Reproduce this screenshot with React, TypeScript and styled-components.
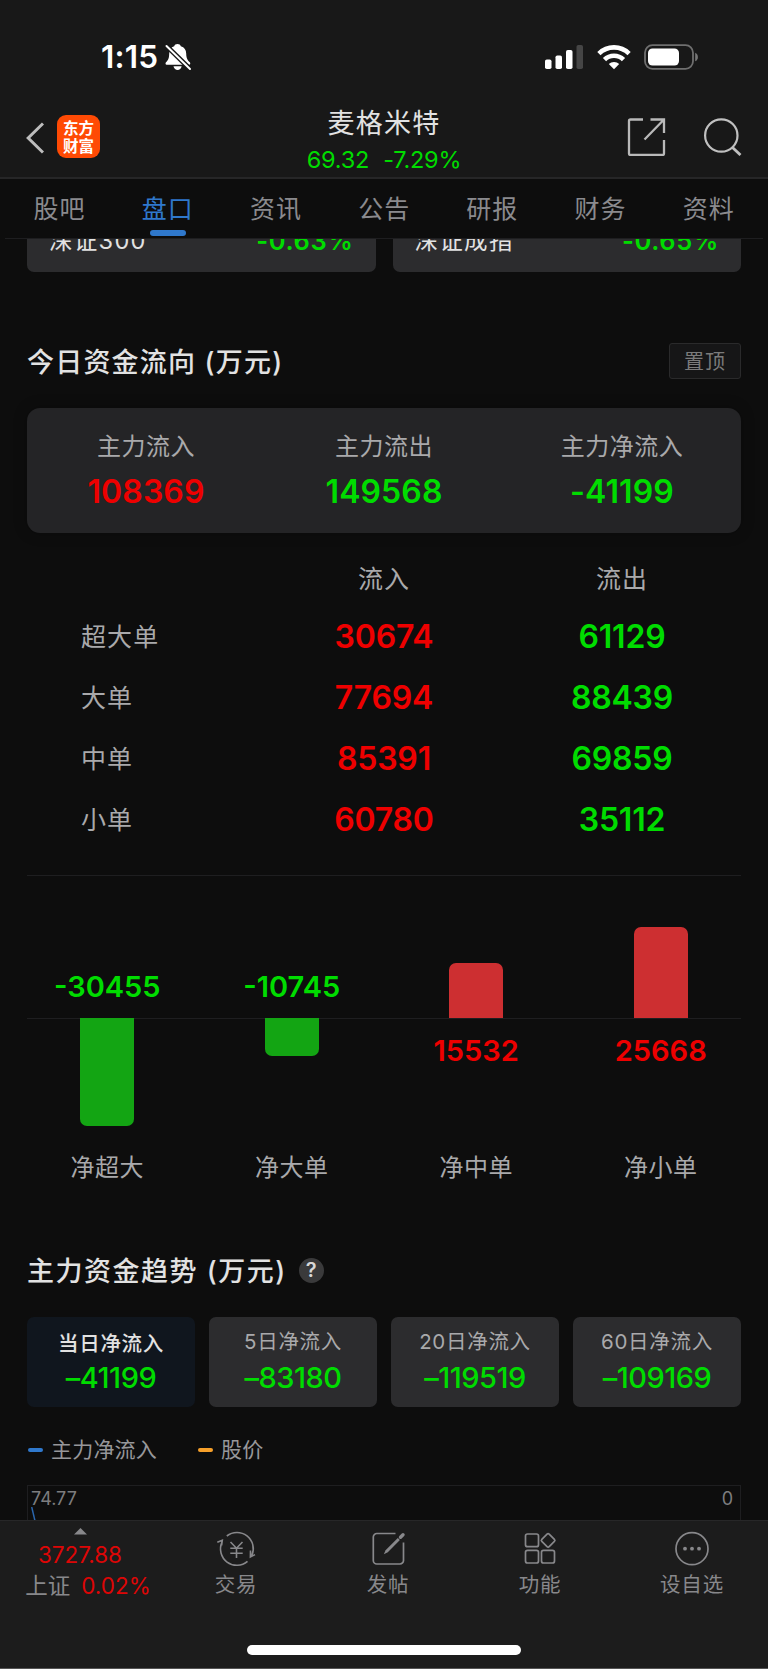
import React from "react";
import styled, { createGlobalStyle, css } from "styled-components";

const RED = "#ee0000";
const GREEN = "#00dc00";
const BLUE = "#2f78cc";
const LINE = "#1e1e20";

const GlobalStyle = createGlobalStyle`
  * { box-sizing: border-box; }
  body {
    margin: 0;
    background: #0d0d0d;
    font-family: Inter, "Noto Sans CJK SC", sans-serif;
    color: #e2e2e2;
    -webkit-font-smoothing: antialiased;
  }
`;

const Page = styled.div`
  width: 768px;
  height: 1669px;
  display: flex;
  flex-direction: column;
  overflow: hidden;
  background: #0d0d0d;
  white-space: nowrap;
`;

/* ---------- status bar ---------- */

const StatusBar = styled.div`
  height: 100px;
  flex: none;
  display: flex;
  justify-content: space-between;
  padding: 40px 69px 0 101px;
  background: #181818;
`;

const StatusGroup = styled.div<{ $gap: number }>`
  height: 34px;
  display: flex;
  align-items: center;
  gap: ${(p) => p.$gap}px;
`;

const Clock = styled.span`
  font-size: 31.5px;
  line-height: 34px;
  font-weight: 600;
  color: #fff;
  width: 57px;
  letter-spacing: 0.2px;
`;

/* ---------- title bar ---------- */

const TitleBar = styled.header`
  height: 79px;
  flex: none;
  display: grid;
  grid-template-columns: 200px 1fr 200px;
  background: #181818;
  border-bottom: 2px solid #262627;
`;

const TitleLeft = styled.div`
  display: flex;
  align-items: flex-start;
  padding: 15px 0 0 26px;
  gap: 13px;
`;

const BackIcon = styled.svg`
  margin-top: 7px;
`;

const Logo = styled.div`
  width: 43px;
  height: 43px;
  border-radius: 9px;
  background: #ff4a04;
  color: #fff;
  font: 700 15.5px/18px "Noto Sans CJK SC", sans-serif;
  text-align: center;
  padding-top: 3px;
`;

const TitleCenter = styled.div`
  display: flex;
  flex-direction: column;
  align-items: center;
  padding-top: 6px;
`;

const StockName = styled.div`
  font-size: 27px;
  line-height: 36px;
  letter-spacing: 1.2px;
`;

const StockPrice = styled.div`
  display: flex;
  gap: 14px;
  font-size: 23.5px;
  line-height: 34px;
  margin-top: 1px;
  color: ${GREEN};
  letter-spacing: -0.2px;
`;

const TitleRight = styled.div`
  display: flex;
  align-items: flex-start;
  justify-content: flex-end;
  gap: 38px;
  padding: 17px 26px 0 0;
`;

/* ---------- tabs ---------- */

const Tabs = styled.nav`
  height: 60px;
  flex: none;
  margin: 0 5px;
  padding: 0 0.5px;
  display: grid;
  grid-template-columns: repeat(7, 108.2px);
  border-bottom: 1px solid ${LINE};
`;

const Tab = styled.div<{ $active?: boolean }>`
  display: flex;
  flex-direction: column;
  align-items: center;
  padding-top: 12px;
  font-size: 25px;
  line-height: 36px;
  letter-spacing: 1px;
  color: ${(p) => (p.$active ? BLUE : "#8a8a8e")};
  &::after {
    content: "";
    display: ${(p) => (p.$active ? "block" : "none")};
    width: 36px;
    height: 6px;
    margin-top: 3px;
    border-radius: 3px;
    background: ${BLUE};
  }
`;

/* ---------- content ---------- */

const Content = styled.main`
  flex: 1;
  min-height: 0;
  overflow: hidden;
  padding: 0 27px;
  display: flex;
  flex-direction: column;
`;

const IndexRow = styled.div`
  display: flex;
  gap: 17px;
  height: 33px;
  flex: none;
  align-items: flex-end;
  overflow: hidden;
`;

const IndexCard = styled.div`
  flex: 1;
  height: 64px;
  display: flex;
  justify-content: space-between;
  padding: 0 22px;
  border-radius: 7px;
  background: #2c2c2e;
`;

const IndexName = styled.span`
  font-size: 23.5px;
  line-height: 65px;
  letter-spacing: 1.3px;
`;

const IndexChange = styled.span`
  font-size: 25.5px;
  line-height: 66px;
  font-weight: 600;
  letter-spacing: 0.6px;
  color: ${GREEN};
`;

const SectionHead = styled.div<{ $top: number }>`
  display: flex;
  align-items: center;
  flex: none;
  height: 36px;
  margin-top: ${(p) => p.$top}px;
`;

const SectionTitle = styled.h2<{ $spacing: number }>`
  margin: 3px 0 0;
  font-size: 27px;
  line-height: 36px;
  font-weight: 500;
  letter-spacing: ${(p) => p.$spacing}px;
`;

const PinButton = styled.button`
  margin-left: auto;
  width: 72px;
  height: 36px;
  padding: 1px 0 0;
  border: 1px solid #2a2a2b;
  border-radius: 3px;
  background: #161617;
  color: #7b7b7b;
  font: 400 20px/34px Inter, "Noto Sans CJK SC", sans-serif;
  letter-spacing: 1px;
`;

const Help = styled.span`
  width: 25px;
  height: 25px;
  margin-left: 12px;
  border-radius: 50%;
  background: #3a3a3b;
  color: #d8d8d8;
  font-size: 20px;
  line-height: 25px;
  font-weight: 600;
  text-align: center;
`;

const Summary = styled.div`
  margin-top: 29px;
  height: 125px;
  flex: none;
  display: grid;
  grid-template-columns: repeat(3, 1fr);
  padding-top: 21px;
  border-radius: 13px;
  background: #242426;
  box-shadow: 0 0 14px rgba(0, 0, 0, 0.25);
  text-align: center;
`;

const SummaryLabel = styled.div`
  font-size: 24px;
  line-height: 36px;
  letter-spacing: 0.5px;
  color: #a9a9ab;
`;

const figure = css<{ $color: string }>`
  color: ${(p) => p.$color};
  font-weight: 600;
`;

const SummaryValue = styled.div<{ $color: string }>`
  ${figure}
  font-size: 32px;
  line-height: 40px;
  margin-top: 7px;
  letter-spacing: 0.1px;
`;

const FlowTable = styled.div`
  flex: none;
  display: grid;
  grid-template-columns: repeat(3, 238px);
  grid-template-rows: 57px repeat(4, 61px);
  margin-top: 16px;
  height: 326px;
  align-items: center;
  text-align: center;
`;

const ColumnName = styled.div`
  padding-top: 3px;
  font-size: 25px;
  line-height: 36px;
  letter-spacing: 1px;
  color: #a9a9ab;
`;

const RowName = styled.div`
  padding: 1px 0 0 54px;
  text-align: left;
  font-size: 25px;
  line-height: 36px;
  letter-spacing: 1.1px;
  color: #a9a9ab;
`;

const FlowValue = styled.div<{ $color: string }>`
  ${figure}
  font-size: 32px;
  line-height: 36px;
  letter-spacing: -0.2px;
`;

const BarChart = styled.div`
  flex: none;
  height: 315px;
  border-top: 1px solid ${LINE};
`;

const BarRow = styled.div<{ $height: number }>`
  height: ${(p) => p.$height}px;
  display: grid;
  grid-template-columns: repeat(4, 160.5px);
  column-gap: 24px;
  justify-items: center;
`;

const UpperRow = styled(BarRow)`
  align-items: end;
  border-bottom: 1px solid ${LINE};
`;

const LowerRow = styled(BarRow)`
  align-items: start;
`;

const Bar = styled.div<{ $up: boolean }>`
  width: 54px;
  border-radius: ${(p) => (p.$up ? "7px 7px 0 0" : "0 0 7px 7px")};
  background: ${(p) => (p.$up ? "#cd2f31" : "#13a513")};
  margin-top: ${(p) => (p.$up ? 0 : -1)}px;
`;

const BarValue = styled.div<{ $color: string }>`
  ${figure}
  font-size: 29px;
  line-height: 36px;
  margin: 14px 0 13px;
`;

const BarLabel = styled.div`
  font-size: 24px;
  line-height: 32px;
  letter-spacing: 0.5px;
  margin-top: -6px;
  color: #a9a9ab;
`;

const TrendCards = styled.div`
  flex: none;
  margin-top: 29px;
  display: grid;
  grid-template-columns: repeat(4, 168px);
  gap: 14px;
`;

const TrendCard = styled.div<{ $active?: boolean }>`
  height: 90px;
  border-radius: 7px;
  background: ${(p) => (p.$active ? "#10161e" : "#2c2c2e")};
  padding-top: ${(p) => (p.$active ? 12 : 10)}px;
  text-align: center;
`;

const TrendName = styled.div<{ $active?: boolean }>`
  font-size: 20.5px;
  line-height: 30px;
  letter-spacing: 0.7px;
  font-weight: ${(p) => (p.$active ? 500 : 400)};
  color: ${(p) => (p.$active ? "#e2e2e2" : "#a9a9ab")};
`;

const TrendValue = styled.div<{ $active?: boolean }>`
  font-size: 29px;
  line-height: 34px;
  margin-top: ${(p) => (p.$active ? 2 : 4)}px;
  letter-spacing: -0.5px;
  font-weight: 500;
  color: ${GREEN};
`;

const Legend = styled.div`
  flex: none;
  display: flex;
  gap: 41px;
  height: 30px;
  margin-top: 28px;
  padding-left: 1px;
`;

const LegendItem = styled.div<{ $color: string }>`
  display: flex;
  align-items: center;
  gap: 8px;
  font-size: 21px;
  line-height: 30px;
  letter-spacing: 0.2px;
  color: #97979a;
  &::before {
    content: "";
    width: 15px;
    height: 4px;
    border-radius: 2px;
    background: ${(p) => p.$color};
  }
`;

const TrendChart = styled.div`
  flex: none;
  height: 60px;
  margin-top: 20px;
  border: 1px solid ${LINE};
  display: flex;
  justify-content: space-between;
  padding: 1px 7px 0 3px;
  font-size: 18px;
  line-height: 24px;
  color: #7d7d7f;
`;

const Axis = styled.div`
  display: flex;
  flex-direction: column;
`;

const TrendLine = styled.svg`
  margin-top: -4px;
`;

/* ---------- bottom bar ---------- */

const BottomBar = styled.footer`
  flex: none;
  height: 149px;
  background: #1c1c1c;
  border-top: 1px solid #272728;
  border-bottom: 1px solid #555;
  display: flex;
  flex-direction: column;
  align-items: center;
  color: #88888b;
`;

const BottomItems = styled.div`
  height: 124px;
  width: 768px;
  display: grid;
  grid-template-columns: 160px 152px 152px 152px 152px;
`;

const MarketIndex = styled.div`
  display: flex;
  flex-direction: column;
  align-items: center;
  padding-top: 7px;
  font-size: 22.5px;
  line-height: 32px;
`;

const MarketPoint = styled.div`
  color: #dd0606;
  margin-top: 4px;
`;

const MarketRow = styled.div`
  display: flex;
  gap: 11px;
  margin-top: -1px;
  padding-left: 16px;
  & > em {
    font-style: normal;
    color: #dd0606;
  }
`;

const Action = styled.div`
  display: flex;
  flex-direction: column;
  align-items: center;
  padding-top: 9px;
  font-size: 20.5px;
  line-height: 30px;
  letter-spacing: 0.8px;
  & > svg {
    margin-bottom: 3px;
  }
`;

const HomeIndicator = styled.div`
  width: 274px;
  height: 10px;
  border-radius: 5px;
  background: #fff;
`;

/* ---------- icons ---------- */

const BellOff = () => (
  <svg width="27" height="28" viewBox="0 0 27 28">
    <g fill="#fff">
      <path d="M12.500 1c1.700 0 2.900.9 3.300 2.300 3.700 1.100 5.300 3.700 5.400 7.200.1 4.700 1.200 6.700 3.600 8.700.8.7.6 2.500-.5 2.500H1.600c-1.200 0-1.400-1.800-.6-2.500 2.400-2.100 3.100-4.100 3.200-8.700.1-3.500 1.600-6.100 5-7.200C9.600 1.900 10.800 1 12.500 1Z" />
      <path d="M8.500 23.300h8.200c-.5 2.300-2.200 3.700-4.100 3.700s-3.700-1.400-4.100-3.700Z" />
    </g>
    <path d="M0.500 2 26 27" stroke="#181818" strokeWidth="4.800" />
    <path d="M1.500 3 25 26" stroke="#fff" strokeWidth="2" strokeLinecap="round" />
  </svg>
);

const Signal = () => (
  <svg width="39" height="26" viewBox="0 0 39 26" fill="#fff">
    <rect x="0" y="15.500" width="6.500" height="9.500" rx="1.800" />
    <rect x="10.500" y="11.500" width="6.500" height="13.500" rx="1.800" />
    <rect x="21" y="6" width="6.500" height="19" rx="1.800" />
    <rect x="31.500" y="1" width="6.500" height="24" rx="1.800" fill="#454545" />
  </svg>
);

const Wifi = () => (
  <svg width="34" height="26" viewBox="0 0 34 26" fill="none" stroke="#fff" strokeWidth="4.600">
    <path d="M1.900 9.600a21.500 21.500 0 0 1 30.200 0" />
    <path d="M7.500 15.600a13.500 13.500 0 0 1 19 0" />
    <path d="M17 25.200 11.800 20a7.500 7.500 0 0 1 10.400 0Z" fill="#fff" stroke="none" />
  </svg>
);

const Battery = () => (
  <svg width="55" height="26" viewBox="0 0 55 26">
    <rect x="1" y="1.200" width="48" height="23.600" rx="7.500" fill="none" stroke="#6f6f6f" strokeWidth="1.800" />
    <rect x="4" y="4.500" width="31" height="17" rx="4.500" fill="#fff" />
    <path d="M51.200 8.700c3.600 1.400 3.600 7.200 0 8.600Z" fill="#777" />
  </svg>
);

const Share = () => (
  <svg width="39" height="39" viewBox="0 0 39 39" fill="none" stroke="#b9b9b9" strokeWidth="2.300">
    <path d="M16 2.500H3.500a1.500 1.500 0 0 0-1.500 1.500V36.500A1.500 1.500 0 0 0 3.500 38H35.500A1.500 1.500 0 0 0 37 36.500V23" />
    <path d="M23.500 2.500H37V16M36.500 3 17.500 22.500" />
  </svg>
);

const Search = () => (
  <svg width="38" height="39" viewBox="0 0 38 39" fill="none" stroke="#c0c0c0" strokeWidth="2.200">
    <circle cx="17.300" cy="18.500" r="16.200" />
    <path d="M28.500 30.500 36.500 38" strokeWidth="2.800" />
  </svg>
);

const TradeIcon = () => (
  <svg width="40" height="37" viewBox="0 0 40 37" fill="none" stroke="#88888b" strokeWidth="1.600">
    <path d="M10.800 6A16.300 16.300 0 0 1 35.800 25.500M34.500 20.500 34.400 27 39 24.600" />
    <path d="M31.500 31.300A16.300 16.300 0 0 1 6 12.200M1.300 12.300 6.300 10.300 5.600 15.500" />
    <path d="M14.500 12l6 6.200 6-6.200M20.500 18.200V28M14.300 18.200h12.400M14.300 23.300h12.400" />
  </svg>
);

const PostIcon = () => (
  <svg width="36" height="37" viewBox="0 0 36 37" fill="none" stroke="#88888b" strokeWidth="1.700">
    <path d="M25.500 3.500H6.800A3.500 3.500 0 0 0 3.300 7V30.500A3.500 3.500 0 0 0 6.800 34H30A3.500 3.500 0 0 0 33.500 30.500V12.500" />
    <path d="M13.800 24.300 15.600 20.300 27.800 7.900 29.900 10 17.800 22.300Z" fill="#88888b" stroke="none" />
    <path d="M30.500 7.200 33 4.700" strokeWidth="3.400" strokeLinecap="round" />
  </svg>
);

const GridIcon = () => (
  <svg width="34" height="37" viewBox="0 0 34 37" fill="none" stroke="#88888b" strokeWidth="1.700">
    <rect x="2.500" y="4" width="13" height="12.700" rx="2" />
    <rect x="2.500" y="20.300" width="13" height="12.700" rx="2" />
    <rect x="18.500" y="20.300" width="13" height="12.700" rx="2" />
    <rect x="19.900" y="5.200" width="10.400" height="10.400" rx="1.500" transform="rotate(45 25.100 10.400)" />
  </svg>
);

const MoreIcon = () => (
  <svg width="36" height="37" viewBox="0 0 36 37">
    <circle cx="18" cy="18.700" r="16" fill="none" stroke="#88888b" strokeWidth="1.700" />
    <g fill="#88888b">
      <circle cx="11" cy="18.700" r="1.900" />
      <circle cx="18" cy="18.700" r="1.900" />
      <circle cx="25" cy="18.700" r="1.900" />
    </g>
  </svg>
);

/* ---------- data ---------- */

const tabs = ["股吧", "盘口", "资讯", "公告", "研报", "财务", "资料"];

const summary = [
  { label: "主力流入", value: "108369", color: RED },
  { label: "主力流出", value: "149568", color: GREEN },
  { label: "主力净流入", value: "-41199", color: GREEN },
];

const flows = [
  ["超大单", "30674", "61129"],
  ["大单", "77694", "88439"],
  ["中单", "85391", "69859"],
  ["小单", "60780", "35112"],
];

const bars = [
  { label: "净超大", value: -30455, size: 108 },
  { label: "净大单", value: -10745, size: 38 },
  { label: "净中单", value: 15532, size: 55 },
  { label: "净小单", value: 25668, size: 91 },
];

const trends = [
  ["当日净流入", "–41199"],
  ["5日净流入", "–83180"],
  ["20日净流入", "–119519"],
  ["60日净流入", "–109169"],
];

const renderBar = (b: (typeof bars)[number]) => (
  <Bar key={b.label} $up={b.value > 0} style={{ height: b.size }} />
);

const renderValue = (b: (typeof bars)[number]) => (
  <BarValue key={b.label} $color={b.value > 0 ? RED : GREEN}>{b.value}</BarValue>
);

export default function App() {
  return (
    <Page>
      <GlobalStyle />
      <StatusBar>
        <StatusGroup $gap={7}>
          <Clock>1:15</Clock>
          <BellOff />
        </StatusGroup>
        <StatusGroup $gap={13}>
          <Signal />
          <Wifi />
          <Battery />
        </StatusGroup>
      </StatusBar>

      <TitleBar>
        <TitleLeft>
          <BackIcon width="18" height="32" viewBox="0 0 18 32" fill="none" stroke="#bdbdbd" strokeWidth="3">
            <path d="M17 1.500 2.200 16 17 30.500" />
          </BackIcon>
          <Logo>东方<br />财富</Logo>
        </TitleLeft>
        <TitleCenter>
          <StockName>麦格米特</StockName>
          <StockPrice>
            <span>69.32</span>
            <span>-7.29%</span>
          </StockPrice>
        </TitleCenter>
        <TitleRight>
          <Share />
          <Search />
        </TitleRight>
      </TitleBar>

      <Tabs>
        {tabs.map((t) => (
          <Tab key={t} $active={t === "盘口"}>{t}</Tab>
        ))}
      </Tabs>

      <Content>
        <IndexRow>
          <IndexCard>
            <IndexName>深证300</IndexName>
            <IndexChange>-0.63%</IndexChange>
          </IndexCard>
          <IndexCard>
            <IndexName>深证成指</IndexName>
            <IndexChange>-0.65%</IndexChange>
          </IndexCard>
        </IndexRow>

        <SectionHead $top={71}>
          <SectionTitle $spacing={1.2}>今日资金流向 (万元)</SectionTitle>
          <PinButton>置顶</PinButton>
        </SectionHead>

        <Summary>
          {summary.map((s) => (
            <div key={s.label}>
              <SummaryLabel>{s.label}</SummaryLabel>
              <SummaryValue $color={s.color}>{s.value}</SummaryValue>
            </div>
          ))}
        </Summary>

        <FlowTable>
          <span />
          <ColumnName>流入</ColumnName>
          <ColumnName>流出</ColumnName>
          {flows.map(([name, inflow, outflow]) => (
            <React.Fragment key={name}>
              <RowName>{name}</RowName>
              <FlowValue $color={RED}>{inflow}</FlowValue>
              <FlowValue $color={GREEN}>{outflow}</FlowValue>
            </React.Fragment>
          ))}
        </FlowTable>

        <BarChart>
          <UpperRow $height={143}>
            {bars.map((b) => (b.value > 0 ? renderBar(b) : renderValue(b)))}
          </UpperRow>
          <LowerRow $height={139}>
            {bars.map((b) => (b.value > 0 ? renderValue(b) : renderBar(b)))}
          </LowerRow>
          <BarRow $height={32}>
            {bars.map((b) => (
              <BarLabel key={b.label}>{b.label}</BarLabel>
            ))}
          </BarRow>
        </BarChart>

        <SectionHead $top={62}>
          <SectionTitle $spacing={1.5}>主力资金趋势 (万元)</SectionTitle>
          <Help>?</Help>
        </SectionHead>

        <TrendCards>
          {trends.map(([name, value], i) => (
            <TrendCard key={name} $active={i === 0}>
              <TrendName $active={i === 0}>{name}</TrendName>
              <TrendValue $active={i === 0}>{value}</TrendValue>
            </TrendCard>
          ))}
        </TrendCards>

        <Legend>
          <LegendItem $color={BLUE}>主力净流入</LegendItem>
          <LegendItem $color="#f6a02a">股价</LegendItem>
        </Legend>

        <TrendChart>
          <Axis>
            <span>74.77</span>
            <TrendLine width="6" height="16" viewBox="0 0 6 16">
              <path d="M0.700 0 4.500 16" stroke="#2b67ae" strokeWidth="1.500" fill="none" />
            </TrendLine>
          </Axis>
          <span>0</span>
        </TrendChart>
      </Content>

      <BottomBar>
        <BottomItems>
          <MarketIndex>
            <svg width="13" height="7" viewBox="0 0 13 7">
              <path d="M6.500 0 13 6.500H0Z" fill="#88888b" />
            </svg>
            <MarketPoint>3727.88</MarketPoint>
            <MarketRow>
              <span>上证</span>
              <em>0.02%</em>
            </MarketRow>
          </MarketIndex>
          <Action><TradeIcon />交易</Action>
          <Action><PostIcon />发帖</Action>
          <Action><GridIcon />功能</Action>
          <Action><MoreIcon />设自选</Action>
        </BottomItems>
        <HomeIndicator />
      </BottomBar>
    </Page>
  );
}
